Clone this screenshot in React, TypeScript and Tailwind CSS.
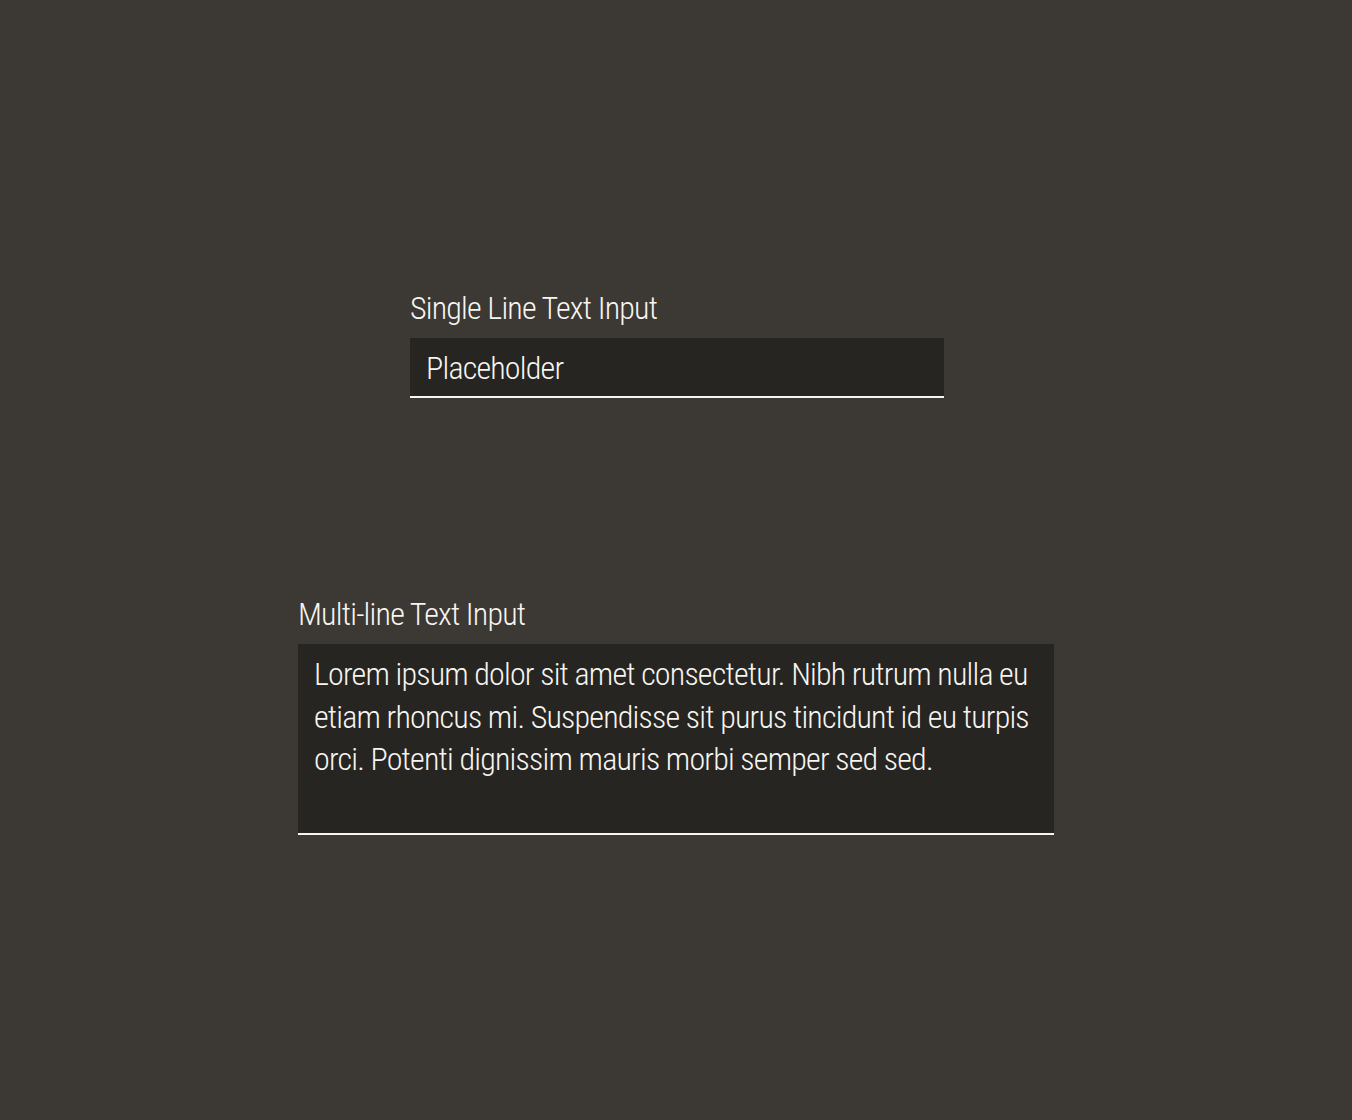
const font = "font-['Roboto_Condensed','Roboto',sans-serif] [font-stretch:condensed] font-light tracking-[-0.8px]";

function Label({ htmlFor, children }: { htmlFor: string; children: React.ReactNode }) {
  return (
    <label htmlFor={htmlFor} className={`${font} block text-[32px] leading-[36px] text-[#f7f5f2]`}>
      {children}
    </label>
  );
}

export default function App() {
  return (
    <main className="min-h-[1120px] w-full bg-[#3c3834] flex flex-col items-center pt-[290px]">
      {/* single line */}
      <div className="w-[534px] ml-[2px] flex flex-col gap-[12px]">
        <Label htmlFor="single">Single Line Text Input</Label>
        <input
          id="single"
          type="text"
          placeholder="Placeholder"
          className={`${font} h-[60px] w-full bg-[#272521] border-b-2 border-[#f7f5f2] px-4 pt-[1px] text-[32px] text-[#f7f5f2] placeholder:text-[#f7f5f2] placeholder:opacity-100 outline-none`}
        />
      </div>

      {/* multi line */}
      <div className="w-[756px] flex flex-col gap-[12px] mt-[198px]">
        <Label htmlFor="multi">Multi-line Text Input</Label>
        <textarea
          id="multi"
          defaultValue="Lorem ipsum dolor sit amet consectetur. Nibh rutrum nulla eu etiam rhoncus mi. Suspendisse sit purus tincidunt id eu turpis orci. Potenti dignissim mauris morbi semper sed sed."
          className={`${font} block h-[191px] w-full resize-none bg-[#272521] border-b-2 border-[#f7f5f2] px-4 pt-[9px] text-[32px] leading-[42.5px] text-[#f7f5f2] outline-none`}
        />
      </div>
    </main>
  );
}
